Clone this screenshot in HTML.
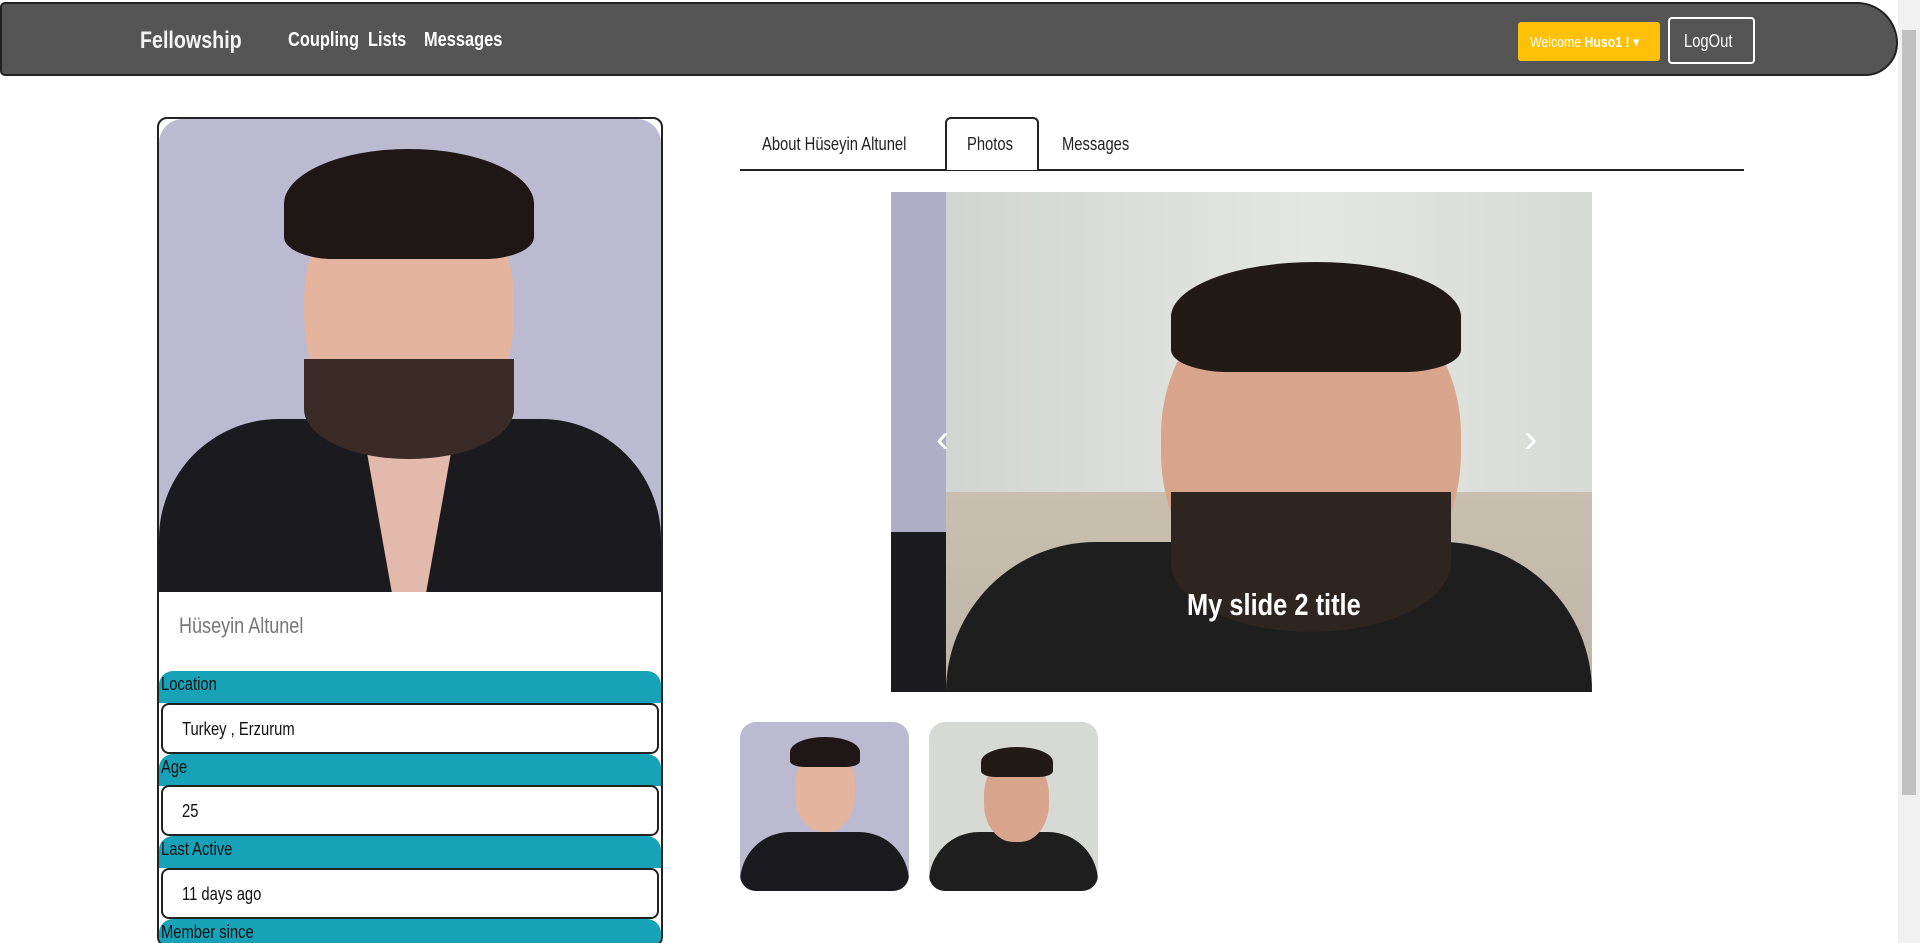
<!DOCTYPE html>
<html style="width:1920px;height:943px;overflow:hidden"><head><meta charset="utf-8"><style>
*{box-sizing:border-box;margin:0;padding:0}
body{width:1920px;height:943px;overflow:hidden;background:#fff;font-family:"Liberation Sans",sans-serif;position:relative}
.abs{position:absolute}
.n{display:inline-block;transform:scaleX(.82);transform-origin:left center;white-space:nowrap}
.nav{left:0;top:2px;width:1898px;height:74px;background:#555;border:2px solid #222;border-radius:6px 50px 40px 6px}
.nav a{position:absolute;color:#fff;font-weight:bold;font-size:20px;top:25px;white-space:nowrap}
.sb{left:1898px;top:0;width:22px;height:943px;background:#f1f1f1}
.sb div{position:absolute;left:4px;top:30px;width:14px;height:765px;background:#c1c1c1}
.card{left:157px;top:117px;width:506px;height:830px;border:2px solid #222;border-radius:10px;overflow:hidden;background:#fff}
.lbl{position:absolute;left:0;width:502px;background:#17a2b8;color:#111;font-size:18px;height:32px;padding:3px 0 0 2px;border-radius:14px 14px 0 0}
.box{position:absolute;left:2px;width:498px;height:51px;background:#fff;border:2px solid #222;border-radius:8px;font-size:18px;padding:14px 0 0 19px;color:#111}
.person{position:absolute;overflow:hidden}
.tab{top:134px;font-size:18px;color:#222}
</style></head><body>
<div class="abs nav">
<a style="left:138px;font-size:24px;font-weight:bold;top:23px;color:#f4f4f4"><span class="n">Fellowship</span></a>
<a style="left:286px"><span class="n">Coupling</span></a><a style="left:366px"><span class="n">Lists</span></a><a style="left:422px"><span class="n">Messages</span></a>
<div class="abs" style="left:1516px;top:18px;width:142px;height:39px;background:#ffc107;border-radius:3px;color:#fff;font-size:15px;padding:11px 0 0 12px;white-space:nowrap"><span class="n">Welcome <b>Huso1 !</b> ▾</span></div>
<div class="abs" style="left:1666px;top:13px;width:87px;height:47px;border:2px solid #fff;border-radius:4px;color:#fff;font-size:18px;padding:12px 0 0 14px"><span class="n">LogOut</span></div>
</div>
<div class="abs sb"><div></div></div>

<div class="abs card">
 <div class="person" style="left:0;top:0;width:502px;height:473px;background:#bcbad0;border-radius:24px 24px 0 0">
  <div class="abs" style="left:0;top:300px;width:502px;height:200px;background:#1b1b1f;border-radius:120px 120px 0 0"></div>
  <div class="abs" style="left:170px;top:300px;width:160px;height:180px;background:#e2b9aa;clip-path:polygon(20% 0,80% 0,60% 100%,40% 100%)"></div>
  <div class="abs" style="left:145px;top:60px;width:210px;height:270px;background:#e5b49f;border-radius:45% 45% 50% 50%"></div>
  <div class="abs" style="left:145px;top:240px;width:210px;height:100px;background:#3a2b26;border-radius:0 0 50% 50%"></div>
  <div class="abs" style="left:125px;top:30px;width:250px;height:110px;background:#1e1716;border-radius:50% 50% 20% 20%"></div>
 </div>
 <div class="abs" style="left:20px;top:494px;font-size:22px;color:#777"><span class="n">Hüseyin Altunel</span></div>
 <div class="lbl" style="top:552px"><span class="n">Location</span></div><div class="box" style="top:584px"><span class="n">Turkey , Erzurum</span></div>
 <div class="lbl" style="top:635px"><span class="n">Age</span></div><div class="box" style="top:666px"><span class="n">25</span></div>
 <div class="lbl" style="top:717px"><span class="n">Last Active</span></div><div class="box" style="top:749px"><span class="n">11 days ago</span></div>
 <div class="lbl" style="top:800px"><span class="n">Member since</span></div>
</div>

<div class="abs" style="left:740px;top:169px;width:1004px;height:2px;background:#222"></div>
<div class="abs" style="left:945px;top:117px;width:94px;height:53px;border:2px solid #222;border-bottom:none;border-radius:6px 6px 0 0;background:#fff"></div>
<div class="abs tab" style="left:762px"><span class="n">About Hüseyin Altunel</span></div>
<div class="abs tab" style="left:967px"><span class="n">Photos</span></div>
<div class="abs tab" style="left:1062px"><span class="n">Messages</span></div>

<div class="abs" style="left:891px;top:192px;width:701px;height:500px;overflow:hidden;background:linear-gradient(90deg,#cfd3cf,#e4e6e2 60%,#d8dad6)">
 <div class="abs" style="left:0;top:0;width:55px;height:500px;background:#b0aec6"></div>
 <div class="abs" style="left:0;top:340px;width:55px;height:160px;background:#1c1c1f"></div>
 <div class="abs" style="left:55px;top:300px;width:646px;height:200px;background:linear-gradient(#c9bfb0,#bdb5a8)"></div>
 <div class="abs" style="left:55px;top:350px;width:646px;height:150px;background:#1e1e1e;border-radius:200px 200px 0 0"></div>
 <div class="abs" style="left:270px;top:90px;width:300px;height:340px;background:#d8a58c;border-radius:45% 45% 50% 50%"></div>
 <div class="abs" style="left:280px;top:300px;width:280px;height:140px;background:#2e2420;border-radius:0 0 50% 50%"></div>
 <div class="abs" style="left:280px;top:70px;width:290px;height:110px;background:#221a17;border-radius:50% 50% 20% 20%"></div>
 <div class="abs" style="left:296px;top:395px;color:#fff;font-size:31px;font-weight:bold;white-space:nowrap"><span class="n">My slide 2 title</span></div>
 <div class="abs" style="left:45px;top:225px;color:#fff;font-size:40px;font-weight:100">‹</div>
 <div class="abs" style="left:633px;top:225px;color:#fff;font-size:40px;font-weight:100">›</div>
</div>

<div class="person" style="left:740px;top:722px;width:169px;height:169px;border-radius:16px;background:#bcbad0">
 <div class="abs" style="left:0;top:110px;width:169px;height:60px;background:#1b1b1f;border-radius:50px 50px 0 0"></div>
 <div class="abs" style="left:55px;top:25px;width:60px;height:85px;background:#e5b49f;border-radius:45%"></div>
 <div class="abs" style="left:50px;top:15px;width:70px;height:30px;background:#1e1716;border-radius:50% 50% 20% 20%"></div>
</div>
<div class="person" style="left:929px;top:722px;width:169px;height:169px;border-radius:16px;background:#d7d9d5">
 <div class="abs" style="left:0;top:110px;width:169px;height:60px;background:#1e1e1e;border-radius:50px 50px 0 0"></div>
 <div class="abs" style="left:55px;top:35px;width:65px;height:85px;background:#d8a58c;border-radius:45%"></div>
 <div class="abs" style="left:52px;top:25px;width:72px;height:30px;background:#221a17;border-radius:50% 50% 20% 20%"></div>
</div>
</body></html>
